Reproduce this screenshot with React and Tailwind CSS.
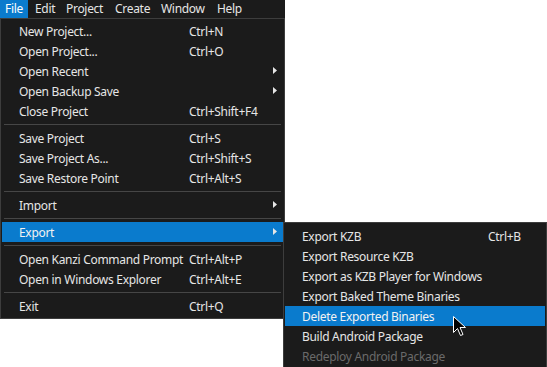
import React from "react";

const font = { fontFamily: '"Noto Sans", "Open Sans", sans-serif' };

function Arrow() {
  return (
    <svg width="4" height="7" viewBox="0 0 4 7" className="block">
      <path d="M0 0 L4 3.5 L0 7 Z" fill="#e6e6e6" />
    </svg>
  );
}

function Item({ label, shortcut, sub, active }) {
  return (
    <div
      className={
        "relative flex h-5 items-center pl-[17px] pt-px text-[12px] leading-none " +
        (active ? "bg-[#0a7bcd] text-[#f2f2f2]" : "text-[#e6e6e6]")
      }
    >
      <span className="w-[170px] whitespace-nowrap">{label}</span>
      {shortcut && <span className="whitespace-nowrap">{shortcut}</span>}
      {sub && (
        <span className="absolute right-[6px] top-[6px]">
          <Arrow />
        </span>
      )}
    </div>
  );
}

function Sep() {
  return <div className="mx-[2px] my-[3px] h-px bg-[#464646]" />;
}

function SubItem({ label, shortcut, active, disabled }) {
  return (
    <div
      className={
        "flex h-5 items-center pl-[17px] pt-px text-[12px] leading-none " +
        (active ? "bg-[#0a7bcd] text-[#f2f2f2]" : disabled ? "text-[#6a6a6a]" : "text-[#e6e6e6]")
      }
    >
      <span className="w-[186px] whitespace-nowrap">{label}</span>
      {shortcut && <span className="whitespace-nowrap">{shortcut}</span>}
    </div>
  );
}

export default function App() {
  return (
    <div className="relative h-[367px] w-[547px] overflow-hidden bg-white tracking-[-0.3px]" style={font}>
      <div className="flex h-[18px] w-[285px] items-stretch bg-[#1b1b1b] text-[12px] leading-none text-[#e6e6e6]">
        <div className="flex w-[28px] items-center bg-[#0a7bcd] pl-[5px] text-white">File</div>
        <div className="flex w-[32px] items-center pl-[7px]">Edit</div>
        <div className="flex w-[50px] items-center pl-[6px]">Project</div>
        <div className="flex w-[46px] items-center pl-[5px]">Create</div>
        <div className="flex w-[56px] items-center pl-[5px]">Window</div>
        <div className="flex items-center pl-[5px]">Help</div>
      </div>
      <div className="w-[285px] border border-[#3d3d3d] bg-[#1b1b1b] px-px py-[2px]">
        <Item label="New Project..." shortcut="Ctrl+N" />
        <Item label="Open Project..." shortcut="Ctrl+O" />
        <Item label="Open Recent" sub />
        <Item label="Open Backup Save" sub />
        <Item label="Close Project" shortcut="Ctrl+Shift+F4" />
        <Sep />
        <Item label="Save Project" shortcut="Ctrl+S" />
        <Item label="Save Project As..." shortcut="Ctrl+Shift+S" />
        <Item label="Save Restore Point" shortcut="Ctrl+Alt+S" />
        <Sep />
        <Item label="Import" sub />
        <Sep />
        <Item label="Export" sub active />
        <Sep />
        <Item label="Open Kanzi Command Prompt" shortcut="Ctrl+Alt+P" />
        <Item label="Open in Windows Explorer" shortcut="Ctrl+Alt+E" />
        <Sep />
        <Item label="Exit" shortcut="Ctrl+Q" />
      </div>

      <div className="absolute left-[283px] top-[222px] w-[264px] border border-[#3d3d3d] bg-[#1b1b1b] px-px pt-[3px] pb-[2px]">
        <SubItem label="Export KZB" shortcut="Ctrl+B" />
        <SubItem label="Export Resource KZB" />
        <SubItem label="Export as KZB Player for Windows" />
        <SubItem label="Export Baked Theme Binaries" />
        <SubItem label="Delete Exported Binaries" active />
        <SubItem label="Build Android Package" />
        <SubItem label="Redeploy Android Package" disabled />
      </div>

      <svg
        className="absolute left-[453px] top-[316px]"
        width="14"
        height="21"
        viewBox="0 0 14 21"
      >
        <path
          d="M0.5 0.5 L0.5 16.5 L4.5 12.5 L7.5 19.5 L10 18.5 L7 11.5 L12.5 11.5 Z"
          fill="#000"
          stroke="#fff"
          strokeWidth="1"
          strokeLinejoin="miter"
        />
      </svg>
    </div>
  );
}
